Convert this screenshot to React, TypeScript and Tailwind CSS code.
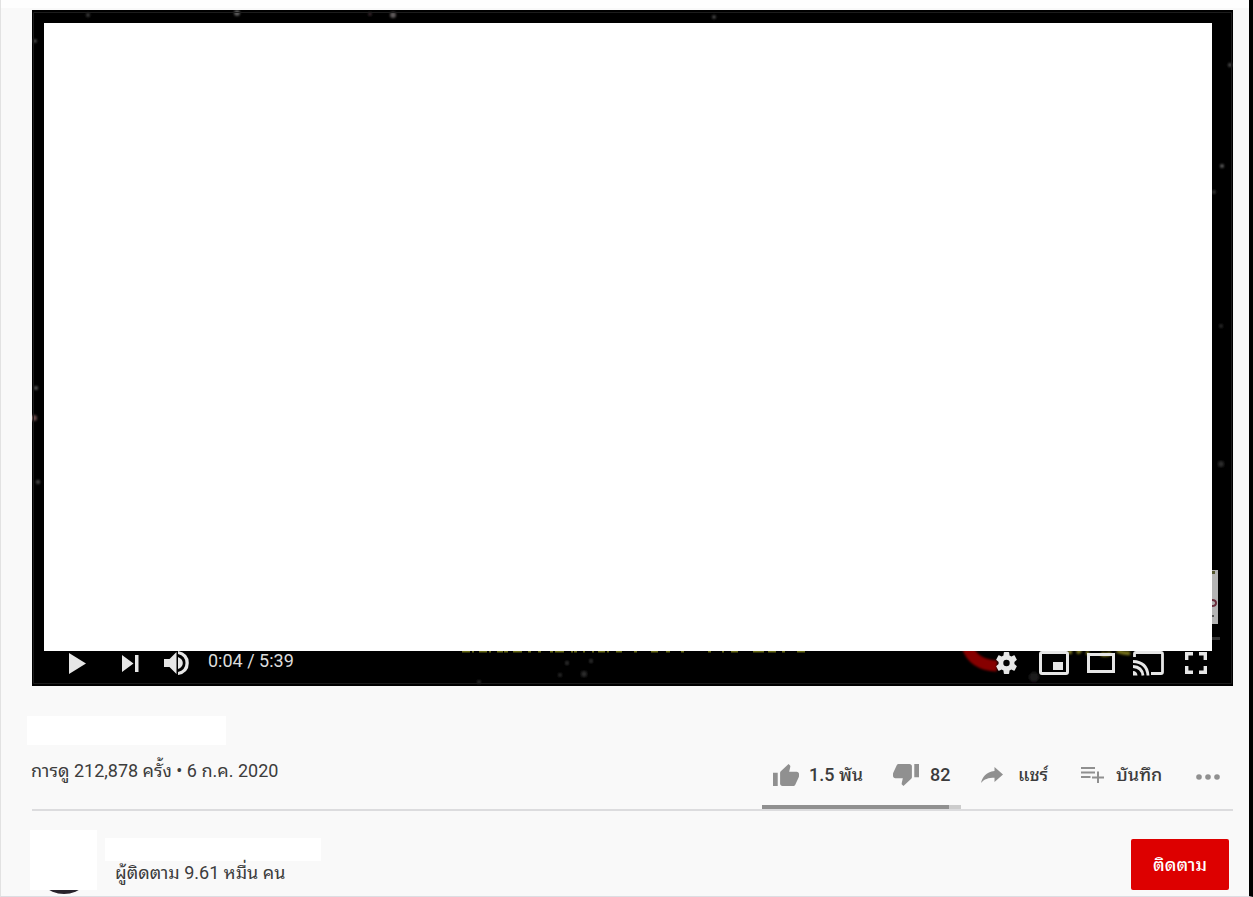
import { useState } from 'react';
import type { ReactNode } from 'react';

type Speck = { x: number; y: number; r: number; fill: string };

const specks: Speck[] = [
  { x: 56, y: 5, r: 2, fill: '#3c3c3c' },
  { x: 205, y: 3, r: 3, fill: '#5c5c5c' },
  { x: 338, y: 4, r: 2, fill: '#33282a' },
  { x: 361, y: 5, r: 3, fill: '#5f5a5b' },
  { x: 682, y: 7, r: 2, fill: '#444444' },
  { x: 3, y: 31, r: 2, fill: '#444444' },
  { x: 4, y: 378, r: 2, fill: '#5a5a5a' },
  { x: 2, y: 408, r: 3, fill: '#6b4b4b' },
  { x: 6, y: 472, r: 2, fill: '#4c4c4c' },
  { x: 1198, y: 55, r: 2, fill: '#4c4c4c' },
  { x: 1190, y: 156, r: 2, fill: '#5c5c5c' },
  { x: 1182, y: 182, r: 2, fill: '#333333' },
  { x: 1189, y: 316, r: 2, fill: '#2c2c2c' },
  { x: 1189, y: 454, r: 3, fill: '#2c2c2c' },
  { x: 535, y: 653, r: 2, fill: '#303030' },
  { x: 559, y: 651, r: 2, fill: '#303030' },
  { x: 528, y: 665, r: 2, fill: '#2c2c2c' },
  { x: 552, y: 664, r: 3, fill: '#2c2c2c' },
  { x: 447, y: 672, r: 2, fill: '#2c2c2c' },
  { x: 1002, y: 667, r: 5, fill: '#1c1a1c' }
];

// Background frame of the video, visible around the blank area
const VideoFrame = () => (
  <svg
    className="absolute inset-0 h-full w-full"
    viewBox="0 0 1201 676"
    preserveAspectRatio="none"
    aria-hidden="true"
  >
    <defs>
      <filter id="soft">
        <feGaussianBlur stdDeviation="1" />
      </filter>
    </defs>
    <g filter="url(#soft)">
      {specks.map((speck, index) => (
        <circle key={index} cx={speck.x} cy={speck.y} r={speck.r} fill={speck.fill} />
      ))}
      <path d="M935 636q6 19 30 20" stroke="#860606" strokeWidth="11" fill="none" />
      <path d="M1036 642h4m5 1l4-3m5 3h3m12 1q6 2 10-1m6-2q8 3 13 2" stroke="#77721a" strokeWidth="4" fill="none" />
    </g>
    <path
      d="M430 641.500H438M440 641.500H442M447 641.500H455M457 641.500H459M465 641.500H471M472 641.500H476M481 641.500H490M496 641.500H499M506 641.500H509M518 641.500H521M523 641.500H532M539 641.500H541M542 641.500H545M551 641.500H553M560 641.500H562M566 641.500H573M575 641.500H577M584 641.500H590M602 641.500H605M619 641.500H626M634 641.500H638M649 641.500H652M676 641.500H679M690 641.500H692M699 641.500H706M721 641.500H732M736 641.500H744M750 641.500H753M765 641.500H773"
      stroke="#686b14"
      strokeWidth="2"
    />
    <path d="M1180 560h6v54h-6z" fill="#b4b4b4" />
    <path d="M1180 561h3v3h-3z" fill="#55572e" />
    <path d="M1180 590q4 0 4 3t-4 3" stroke="#6b2c3b" strokeWidth="2" fill="none" />
    <path d="M1180 605h2v2h-2z" fill="#555555" />
    <path d="M1180 627h8v3h-8z" fill="#333333" />
    <path d="M1.500 2.500h1198v671h-1198z" fill="none" stroke="#1c1c1c" />
  </svg>
);

type PlayerButtonProps = {
  label: string;
  className?: string;
  onClick?: () => void;
  children: ReactNode;
};

const PlayerButton = ({ label, className = '', onClick, children }: PlayerButtonProps) => (
  <button type="button" aria-label={label} onClick={onClick} className={`shrink-0 cursor-pointer ${className}`}>
    {children}
  </button>
);

const PlayerControls = () => {
  const [playing, setPlaying] = useState(false);

  return (
    <div className="relative flex h-6 items-center pl-[37px] pr-[26px] text-[#e6e6e6]">
      <PlayerButton label="เล่น" className="mr-9" onClick={() => setPlaying(!playing)}>
        <svg className="h-[21px] w-[17px]" viewBox="0 0 17 21" fill="currentColor">
          {playing ? <path d="M0 0h6v21H0zM11 0h6v21h-6z" /> : <path d="M0 0l17 10.500L0 21z" />}
        </svg>
      </PlayerButton>
      <PlayerButton label="ถัดไป" className="mr-[25px]">
        <svg className="h-[17px] w-[17px]" viewBox="0 0 17 17" fill="currentColor">
          <path d="M0 0l11.500 8.500L0 17zM13 0H16.500v17h-3.500z" />
        </svg>
      </PlayerButton>
      <PlayerButton label="ปิดเสียง" className="mr-[19px]">
        <svg className="h-6 w-[25px]" viewBox="0 0 25 24" fill="currentColor">
          <path d="M0 8h5.500L12.500 1v22L5.500 16H0zM14 6q4.800 2 4.800 6t-4.800 6zM14 0q10.800 2 10.800 12T14 24v-3q7.500-2 7.500-9T14 3z" />
        </svg>
      </PlayerButton>
      <span className="-mt-1 text-lg leading-6 text-[#dddddd]">0:04 / 5:39</span>

      <div className="ml-auto flex items-center">
        <PlayerButton label="การตั้งค่า" className="mr-[22px]">
          <svg className="h-[22px] w-[21px]" viewBox="2.5 2.4 19 19.200" preserveAspectRatio="none" fill="currentColor">
            <path d="M19.14 12.94c.04-.3.06-.61.06-.94 0-.32-.02-.64-.07-.94l2.030-1.580c.18-.14.23-.41.12-.61l-1.920-3.320c-.12-.22-.37-.29-.59-.22l-2.390.96c-.5-.38-1.030-.7-1.620-.94l-.36-2.540c-.04-.24-.24-.41-.48-.41h-3.840c-.24 0-.43.17-.47.41l-.36 2.540c-.59.24-1.130.57-1.620.94l-2.390-.96c-.22-.08-.47 0-.59.22L2.740 8.870c-.12.21-.08.47.12.61l2.030 1.580c-.05.3-.09.63-.09.94s.02.64.07.94l-2.030 1.580c-.18.14-.23.41-.12.61l1.920 3.320c.12.22.37.29.59.22l2.390-.96c.5.38 1.030.7 1.620.94l.36 2.540c.05.24.24.41.48.41h3.840c.24 0 .44-.17.47-.41l.36-2.540c.59-.24 1.130-.56 1.620-.94l2.390.96c.22.08.47 0 .59-.22l1.920-3.320c.12-.22.07-.47-.12-.61l-2.010-1.580zM12 14.900a2.900 2.900 0 1 1 0-5.800 2.900 2.900 0 0 1 0 5.800z" />
          </svg>
        </PlayerButton>
        <PlayerButton label="มินิเพลเยอร์" className="mr-[18px]">
          <svg className="h-6 w-[30px]" viewBox="0 0 30 24" fill="none">
            <rect x="1.500" y="1.500" width="27" height="21" rx="1.500" stroke="currentColor" strokeWidth="3" />
            <path d="M14 11h10v8H14z" fill="currentColor" />
          </svg>
        </PlayerButton>
        <PlayerButton label="โหมดโรงภาพยนตร์" className="mr-[18px]">
          <svg className="h-5 w-7" viewBox="0 0 28 20" fill="none">
            <path d="M1.500 1.500h25v17h-25z" stroke="currentColor" strokeWidth="3" />
          </svg>
        </PlayerButton>
        <PlayerButton label="เล่นบนทีวี" className="mr-[21px]">
          <svg className="h-[25px] w-[31px]" viewBox="0 0 31 25" fill="none" stroke="currentColor" strokeWidth="2.800">
            <path d="M1.500 6V3q0-1.500 1.500-1.500h25q1.500 0 1.500 1.500v18q0 1.500-1.500 1.500H18" />
            <path d="M0 10.500Q14 11 15 24.500M0 15.500Q9 16 10 24.500" />
            <path d="M0 20q4 0 4.500 4.500H0z" fill="currentColor" stroke="none" />
          </svg>
        </PlayerButton>
        <PlayerButton label="เต็มหน้าจอ">
          <svg className="h-[22px] w-[22px]" viewBox="0 0 22 22" fill="none" stroke="currentColor" strokeWidth="3.400">
            <path d="M1.700 8V1.700H8M14 1.700h6.300V8M20.300 14v6.300H14M8 20.300H1.700V14" />
          </svg>
        </PlayerButton>
      </div>
    </div>
  );
};

const VideoActions = () => (
  <div className="ml-auto flex h-full items-start pr-[13px] text-lg font-medium leading-6 text-[#3c3c3c]">
    <div className="relative mr-5 flex h-full items-start gap-8 px-[11px] pt-[18px]">
      <button type="button" aria-label="ชอบ" className="flex cursor-pointer items-center gap-[10px]">
        <svg className="h-[22px] w-[26px] text-[#909090]" viewBox="1 1 22 20" preserveAspectRatio="none" fill="currentColor">
          <path d="M1 21h4V9H1v12zm22-11c0-1.100-.9-2-2-2h-6.310l.95-4.570.03-.32c0-.41-.17-.79-.44-1.060L14.170 1 7.590 7.590C7.220 7.950 7 8.450 7 9v10c0 1.100.9 2 2 2h9c.83 0 1.540-.5 1.840-1.220l3.020-7.050c.09-.23.14-.47.14-.73v-2z" />
        </svg>
        <span className="w-[52px] whitespace-nowrap text-left">1.5 พัน</span>
      </button>
      <button type="button" aria-label="ไม่ชอบ" className="flex cursor-pointer items-center gap-[11px]">
        <svg className="h-[22px] w-[26px] text-[#909090]" viewBox="1 3 22 20" preserveAspectRatio="none" fill="currentColor">
          <path d="M15 3H6c-.83 0-1.540.5-1.840 1.220l-3.020 7.050c-.09.23-.14.47-.14.73v2c0 1.100.9 2 2 2h6.310l-.95 4.570-.03.32c0 .41.17.79.44 1.060L9.830 23l6.590-6.590c.36-.36.58-.86.58-1.410V5c0-1.100-.9-2-2-2zm4 0v12h4V3h-4z" />
        </svg>
        <span className="w-5 text-left">82</span>
      </button>
      {/* like / dislike ratio */}
      <div className="absolute inset-x-0 bottom-0 flex h-1 bg-[#cccccc]">
        <div className="w-[94%] bg-[#909090]" />
      </div>
    </div>
    <div className="flex items-center pt-[18px]">
      <button type="button" className="mr-[33px] flex cursor-pointer items-center gap-[15px]">
        <svg className="h-4 w-[22px] text-[#909090]" viewBox="0 0 22 16" fill="currentColor">
          <path d="M13.500 4V0L22 7.500 13.500 15v-4.300C7.500 10.700 3 12 0 16 1.200 10.500 5 5 13.500 4z" />
        </svg>
        <span className="w-[30px] whitespace-nowrap text-left">แชร์</span>
      </button>
      <button type="button" className="mr-9 flex cursor-pointer items-center gap-3">
        <svg className="h-4 w-[23px] text-[#909090]" viewBox="0 0 23 16" fill="currentColor">
          <path d="M0 0h14v2H0zM0 4.500h14v2H0zM0 9h9.500v2H0zM16 4.500h2v5h5v2h-5V16h-2v-4.500h-5v-2h5z" />
        </svg>
        <span className="w-11 whitespace-nowrap text-left">บันทึก</span>
      </button>
      <button type="button" aria-label="เพิ่มเติม" className="mt-1 cursor-pointer">
        <svg className="h-[6px] w-6 text-[#909090]" viewBox="0 0 24 6" fill="currentColor">
          <circle cx="3" cy="3" r="2.800" />
          <circle cx="12" cy="3" r="2.800" />
          <circle cx="21" cy="3" r="2.800" />
        </svg>
      </button>
    </div>
  </div>
);

const App = () => {
  const [subscribed, setSubscribed] = useState(false);

  return (
    <div className="border-b border-l border-r-4 border-b-[#dddde2] border-l-[#e2e2e2] border-r-black bg-[#f9f9f9] font-[Roboto,'Noto_Sans_Thai_Looped',Loma,Waree,Garuda,'Noto_Sans',sans-serif] text-[#3c3c3c]">
      <div className="h-2 bg-[#fefefe]" />
      <main className="pb-[2px] pl-[31px] pr-4 pt-[2px]">
        <section className="relative bg-black pb-[11px] pt-[13px]">
          <VideoFrame />
          <div className="relative ml-3 mr-[21px] aspect-[1168/628] bg-white" />
          <PlayerControls />
        </section>

        <div className="-ml-[5px] mt-[30px] h-[29px] w-[199px] bg-white" />

        <div className="flex h-16 items-start">
          <p className="-ml-px whitespace-nowrap pt-[14px] text-lg leading-6">การดู 212,878 ครั้ง • 6 ก.ค. 2020</p>
          <VideoActions />
        </div>
        <hr className="border-t-2 border-[#dcdcde]" />

        <section className="mt-[19px] flex items-start">
          <div className="relative -ml-[2px] h-[64px] w-[67px] shrink-0 overflow-hidden">
            <div className="absolute bottom-0 left-1 h-[60px] w-[60px] rounded-full bg-[#28242c]" />
            <div className="relative h-[60px] bg-white" />
          </div>
          <div className="ml-2 mt-2">
            <div className="h-[23px] w-[216px] bg-white" />
            <p className="pl-[10px] text-lg leading-6">ผู้ติดตาม 9.61 หมื่น คน</p>
          </div>
          <button
            type="button"
            aria-pressed={subscribed}
            onClick={() => setSubscribed(!subscribed)}
            className="ml-auto mr-1 mt-[9px] h-[51px] w-[98px] cursor-pointer rounded-xs bg-[#dd0000] text-lg font-medium text-white"
          >
            ติดตาม
          </button>
        </section>
      </main>
    </div>
  );
};

export default App;
